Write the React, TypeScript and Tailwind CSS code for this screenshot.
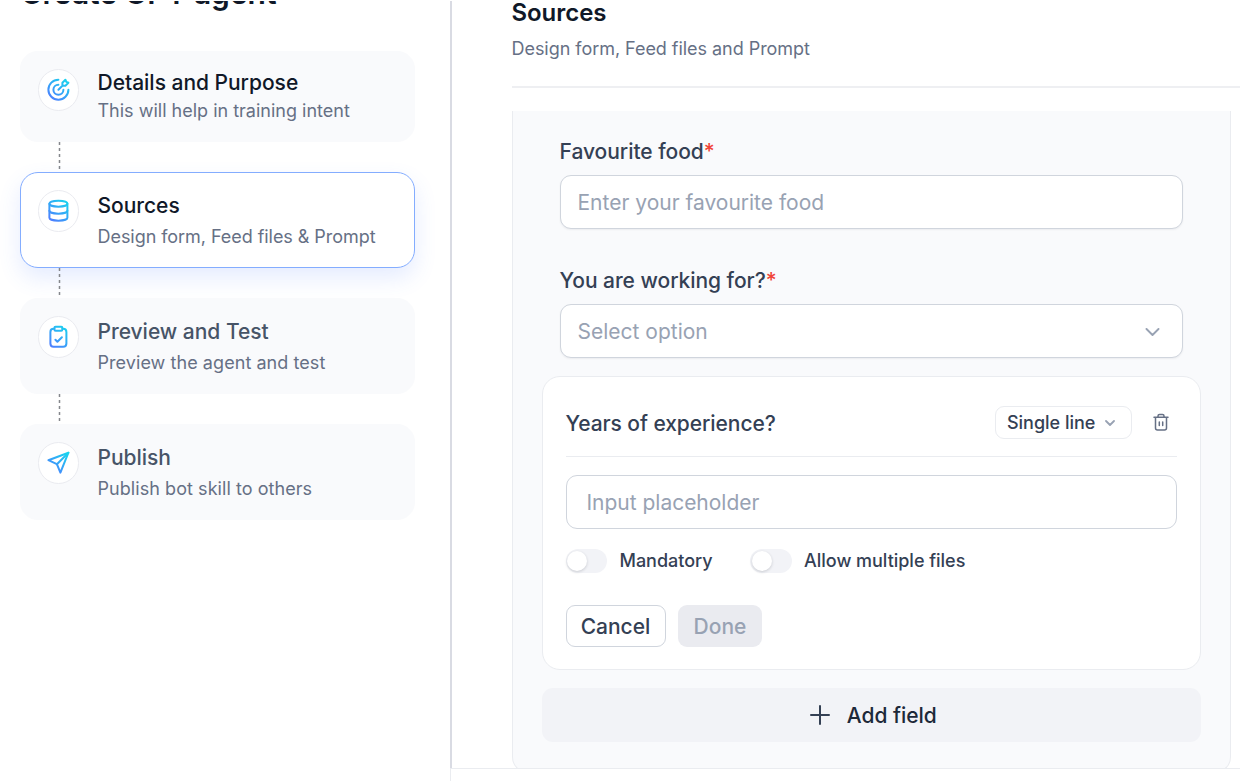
import React from "react";

type StepIcon = "target" | "database" | "clipboard" | "send";

interface Step {
  title: string;
  subtitle: string;
  icon: StepIcon;
  state: "done" | "active" | "pending";
}

const steps: Step[] = [
  { title: "Details and Purpose", subtitle: "This will help in training intent", icon: "target", state: "done" },
  { title: "Sources", subtitle: "Design form, Feed files & Prompt", icon: "database", state: "active" },
  { title: "Preview and Test", subtitle: "Preview the agent and test", icon: "clipboard", state: "pending" },
  { title: "Publish", subtitle: "Publish bot skill to others", icon: "send", state: "pending" },
];

const iconShapes: Record<StepIcon, React.ReactNode> = {
  target: (
    <>
      <path d="M12 2a10 10 0 1 0 10 10" />
      <path d="M12 7a5 5 0 1 0 5 5" />
      <path d="M12 12l4.500-4.500M16 8V5l3-3 .9 2.100L22 5l-3 3z" />
    </>
  ),
  database: (
    <>
      <ellipse cx="12" cy="5" rx="9" ry="3" />
      <path d="M3 5v14c0 1.660 4 3 9 3s9-1.340 9-3V5" />
      <path d="M3 12c0 1.660 4 3 9 3s9-1.340 9-3" />
    </>
  ),
  clipboard: (
    <>
      <path d="M16 4h.8c1.600 0 3.200.9 3.200 3.200v11.600c0 2.300-1 3.200-3.200 3.200H7.200C5 22 4 21.100 4 18.800V7.200C4 4.900 5.600 4 7.200 4H8" />
      <rect x="8" y="2" width="8" height="4" rx="1.200" />
      <path d="M9 15l2 2 4.500-4.500" />
    </>
  ),
  send: (
    <>
      <path d="M22 2L2 9.500l8.500 4L14 22z" />
      <path d="M22 2L10.500 13.500" />
    </>
  ),
};

function GradientIcon({ name }: { name: StepIcon }) {
  return (
    <svg
      viewBox="-0.4 0.3 24 24"
      className="size-6"
      fill="none"
      stroke={`url(#stroke-${name})`}
      strokeWidth="2"
      strokeLinecap="round"
      strokeLinejoin="round"
    >
      <defs>
        <linearGradient id={`stroke-${name}`} gradientUnits="userSpaceOnUse" x1="4" y1="22" x2="20" y2="2">
          <stop offset="0" stopColor="#4f7cff" />
          <stop offset="1" stopColor="#18d3ee" />
        </linearGradient>
      </defs>
      {iconShapes[name]}
    </svg>
  );
}

function StepCard({ step }: { step: Step }) {
  const active = step.state === "active";
  const done = step.state === "done";
  return (
    <div
      className={
        "flex w-[395.400px] gap-[18.500px] rounded-[18px] pt-[17px] pl-[17px] " +
        (done ? "h-[91px] " : "h-24 ") +
        (active
          ? "border-[1.500px] border-[#84adff] bg-white shadow-[0_10px_22px_rgba(68,120,255,0.14)]"
          : "border border-[#f9fafc] bg-[#f9fafc]")
      }
    >
      <div className="flex size-[41.500px] shrink-0 items-center justify-center rounded-full border-[1.500px] border-[#eaebf0] bg-white">
        <GradientIcon name={step.icon} />
      </div>
      <div className={"flex flex-col whitespace-nowrap " + (done ? "" : "mt-0.5 gap-[3px]")}>
        <div
          className={
            "text-[21px] leading-7 font-medium tracking-[-0.02px] " +
            (step.state === "pending" ? "text-[#475467]" : "text-[#101828]")
          }
        >
          {step.title}
        </div>
        <div
          className={
            "text-[18px] leading-7 text-[#667085] " + (active ? "tracking-[-0.050px]" : done ? "" : "tracking-[0.060px]")
          }
        >
          {step.subtitle}
        </div>
      </div>
    </div>
  );
}

function Connector() {
  return (
    <svg className="ml-[38px] block h-[30px] w-[3px]" viewBox="0 0 3 30">
      <path d="M1.500 0V30" stroke="#85878c" strokeWidth="1.500" strokeDasharray="3 3" />
    </svg>
  );
}

function Label({ children }: { children: string }) {
  return (
    <label className="block pt-px text-[21px] leading-7 font-medium tracking-[-0.040px] whitespace-nowrap text-[#344054]">
      {children}
      <span className="text-[#f04438]">*</span>
    </label>
  );
}

function Toggle({ label }: { label: string }) {
  return (
    <div className="flex items-center gap-3">
      <span className="flex h-6 w-[41.500px] items-center rounded-full bg-[#f2f3f7] p-0.5">
        <span className="-ml-[0.500px] size-5 rounded-full bg-white shadow-[0_1px_3px_rgba(16,24,40,0.18)]" />
      </span>
      <span className="pl-[0.500px] text-[18px] leading-6 font-medium tracking-[-0.020px] whitespace-nowrap text-[#344054]">
        {label}
      </span>
    </div>
  );
}

export default function App() {
  return (
    <div className="flex h-[781px] w-[1240px] overflow-hidden bg-white font-['Inter',sans-serif]">
      <aside className="mt-px flex w-[450px] shrink-0 flex-col overflow-hidden pl-[19.500px]">
        <h1 className="-mt-[26px] h-[76px] shrink-0 pl-px text-[30px] leading-9 font-semibold whitespace-nowrap text-[#101828]">
          Create GPT agent
        </h1>
        {steps.map((step, i) => (
          <React.Fragment key={step.title}>
            {i > 0 && <Connector />}
            <StepCard step={step} />
          </React.Fragment>
        ))}
      </aside>

      <main className="mt-px flex min-w-0 flex-1 flex-col">
        <section className="flex h-[767px] flex-col overflow-hidden border-l-2 border-[#d9dbe3] pl-[59.500px]">
          <header className="flex h-[87px] shrink-0 flex-col border-b-2 border-[#eeeff2] whitespace-nowrap">
            <h2 className="-mt-1 text-[24px] leading-8 font-semibold tracking-[-0.050px] text-[#101828]">Sources</h2>
            <p className="mt-1.5 text-[18px] leading-7 tracking-[-0.040px] text-[#667085]">
              Design form, Feed files and Prompt
            </p>
          </header>

          <div className="mt-[23px] h-[662px] w-[719.400px] shrink-0 rounded-b-[16px] border-x border-b border-[#eaecf0] bg-[#f9fafc] px-[29px] pt-[26px]">
            <div className="px-[18px]">
              <Label>Favourite food</Label>
              <div className="mt-[9px] flex h-[54px] w-[623.400px] items-center rounded-[11px] border-[1.500px] border-[#d0d5dd] bg-white px-[17px] pt-0.5 text-[21px] text-[#98a2b3] shadow-[0_1px_2px_rgba(16,24,40,0.06)]">
                Enter your favourite food
              </div>
              <div className="mt-[37px]">
                <Label>You are working for?</Label>
              </div>
              <div className="mt-[9px] flex h-[54px] w-[623.400px] items-center justify-between rounded-[11px] border-[1.500px] border-[#d0d5dd] bg-white pt-0.5 pr-[21.500px] pl-[17px] text-[21px] text-[#98a2b3] shadow-[0_1px_2px_rgba(16,24,40,0.06)]">
                Select option
                <svg viewBox="0 0 15 8" className="h-2 w-[15px]" fill="none" stroke="#98a2b3" strokeWidth="1.900" strokeLinecap="round" strokeLinejoin="round">
                  <path d="M1.500 1l6 6 6-6" />
                </svg>
              </div>
            </div>

            <div className="mt-[18px] h-[294px] w-[659.400px] rounded-[18px] border border-[#eaecf0] bg-white px-[23px] pt-[28px]">
              <div className="flex h-[52px] w-[611.400px] border-b border-[#eaecf0]">
                <div className="mt-[5px] flex-1 text-[21px] leading-7 font-medium tracking-[-0.070px] whitespace-nowrap text-[#344054]">
                  Years of experience?
                </div>
                <div className="mt-px flex h-[33px] w-[137.500px] items-center gap-[9.500px] rounded-[9px] border-[1.500px] border-[#eaecf0] pl-[11px] text-[18px] font-medium whitespace-nowrap text-[#344054]">
                  Single line
                  <svg viewBox="0 0 10 6" className="h-1.5 w-2.5" fill="none" stroke="#98a2b3" strokeWidth="1.800" strokeLinecap="round" strokeLinejoin="round">
                    <path d="M1 1l4 4 4-4" />
                  </svg>
                </div>
                <svg
                  viewBox="0 0 16 18"
                  className="mt-2 mr-2 ml-[20.500px] h-[18px] w-4"
                  fill="none"
                  stroke="#667085"
                  strokeWidth="1.500"
                  strokeLinecap="round"
                  strokeLinejoin="round"
                >
                  <path d="M1 4.300h14M2.500 4.500v10.500q0 2 2 2h7q2 0 2-2V4.500M5 4V3Q5 1.500 6.500 1.500h3Q11 1.500 11 3V4M6.300 9v3.500M9.700 9v3.500" />
                </svg>
              </div>
              <div className="mt-[18px] flex h-[54px] w-[611.400px] items-center rounded-[11px] border-[1.500px] border-[#d0d5dd] px-5 pt-0.5 text-[21px] tracking-[-0.020px] text-[#98a2b3]">
                Input placeholder
              </div>
              <div className="mt-5 flex gap-[37.500px]">
                <Toggle label="Mandatory" />
                <Toggle label="Allow multiple files" />
              </div>
              <div className="mt-8 flex gap-3 text-[21px] font-medium">
                <button className="h-[42px] w-[100px] rounded-[9px] border-[1.500px] border-[#d0d5dd] pt-px text-[#344054]">
                  Cancel
                </button>
                <button className="h-[42px] w-[84px] rounded-[9px] bg-[#eaebf0] pt-px pl-px text-[#98a2b3]">Done</button>
              </div>
            </div>

            <button className="mt-[18px] flex h-[54px] w-[659.400px] items-center justify-center gap-[17px] rounded-[11px] bg-[#f2f3f7] pl-1 text-[21px] font-medium tracking-[-0.040px] text-[#1d2939]">
              <svg viewBox="0 0 20 20" className="size-5" stroke="#344054" strokeWidth="2" strokeLinecap="round">
                <path d="M10 1v18M1 10h18" />
              </svg>
              <span className="pt-px">Add field</span>
            </button>
          </div>
        </section>
        <div className="h-[13px] border-t border-l border-[#eaecf0]" />
      </main>
    </div>
  );
}
